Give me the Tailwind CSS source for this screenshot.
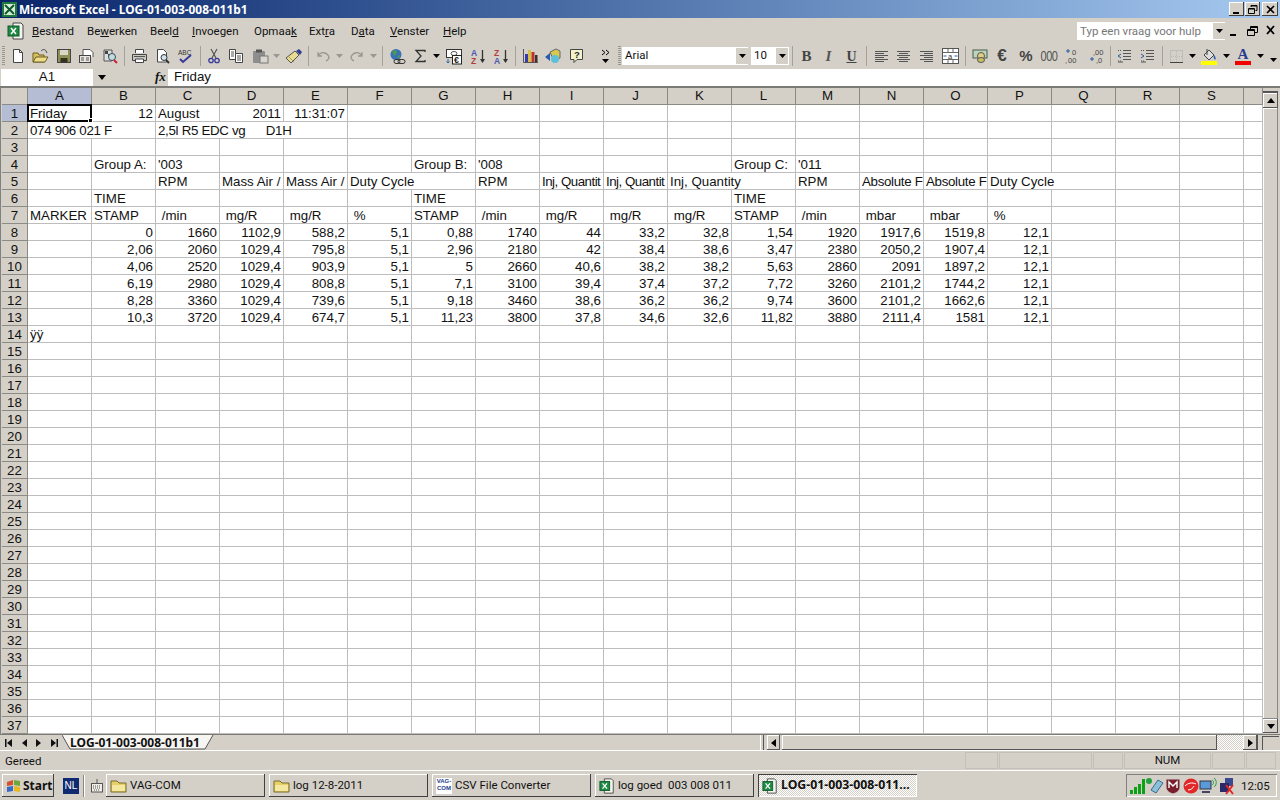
<!DOCTYPE html>
<html><head><meta charset="utf-8"><script src="https://cdn.jsdelivr.net/npm/@tailwindcss/browser@4"></script></head>
<body>
<div class="w-[1280px] h-[800px] overflow-hidden flex flex-col bg-[#d4d0c8] text-[#111] font-['Roboto',sans-serif] text-[11.500px]">
<!-- title -->
<div class="h-[18px] shrink-0 flex items-center bg-linear-to-r from-[#0a246a] to-[#a6caf0] pl-[2px]">
<svg class="w-[15px] h-[15px]" viewBox="0 0 15 15"><rect width="15" height="15" fill="#1d7a3a"/><rect x="2" y="2" width="11" height="11" fill="#d8eadb"/><path d="M3 3l9 9M12 3l-9 9" stroke="#0d5a26" stroke-width="2"/></svg>
<span class="ml-[2px] text-white font-bold font-['Noto_Sans',sans-serif] text-[11.900px] leading-[18px] whitespace-nowrap">Microsoft Excel - LOG-01-003-008-011b1</span>
<div class="ml-auto flex mr-[2px] [&>span]:w-[15px] [&>span]:h-[14px] [&>span]:bg-[#d4d0c8] [&>span]:flex [&>span]:items-center [&>span]:justify-center [&>span]:shadow-[inset_-1px_-1px_0_#404040,inset_1px_1px_0_#fff]">
<span class="mr-[1px]"><svg width="9" height="9" viewBox="0 0 9 9"><rect x="1" y="7" width="6" height="2" fill="#000"/></svg></span>
<span class="mr-[2px]"><svg width="10" height="9" viewBox="0 0 10 9" fill="none" stroke="#000"><path d="M3 2V.5h6v5H7.5M.5 3.5h6v5h-6z"/><path d="M3 1h6M1 4h5"/></svg></span>
<span class="w-[16px]!"><svg width="9" height="9" viewBox="0 0 9 9" stroke="#000" stroke-width="1.6"><path d="M1 1l7 7M8 1l-7 7"/></svg></span>
</div>
</div>
<!-- menu -->
<div class="h-[25px] shrink-0 flex items-center relative">
<span class="ml-[2px] w-[5px] h-[18px]"></span>
<svg class="w-[18px] h-[18px] mr-[7px]" viewBox="0 0 18 18"><path d="M6 1h8l2 2v14H6z" fill="#f4f4ee" stroke="#444"/><rect x="1" y="4" width="11" height="10" fill="#1e8a44" stroke="#0c5a28"/><path d="M4 6l5 6M9 6l-5 6" stroke="#fff" stroke-width="1.4"/></svg>
<div class="flex [&>span]:block whitespace-nowrap leading-[16px]">
<span class="w-[55px]"><u>B</u>estand</span><span class="w-[63px]">Be<u>w</u>erken</span><span class="w-[42px]">Beel<u>d</u></span><span class="w-[62px]"><u>I</u>nvoegen</span><span class="w-[55px]">Opmaa<u>k</u></span><span class="w-[42px]">Ext<u>r</u>a</span><span class="w-[39px]">D<u>a</u>ta</span><span class="w-[53px]"><u>V</u>enster</span><span class="w-[30px]"><u>H</u>elp</span>
</div>
<div class="ml-auto flex items-center mr-[2px]">
<div class="w-[148px] h-[18px] bg-white flex items-center pl-[3px] text-[#777] leading-[18px] whitespace-nowrap">Typ een vraag voor hulp<span class="ml-auto w-[12px] h-[16px] bg-[#d4d0c8] flex items-center justify-center"><svg width="7" height="4" viewBox="0 0 7 4"><path d="M0 0h7L3.5 4z" fill="#000"/></svg></span></div>
<svg class="ml-[3px] w-[50px] h-[14px]" viewBox="0 0 50 14"><rect x="2" y="10" width="6" height="2" fill="#000"/><path d="M22.5 5V2.500h7v6H27M19.500 5.500h7v6h-7z M22 3.500h7M20 6.500h6" fill="none" stroke="#000"/><path d="M39 2l7 8M46 2l-7 8" stroke="#000" stroke-width="1.800"/></svg>
</div>
</div>
<!-- toolbar -->
<div class="h-[26px] shrink-0 flex items-center whitespace-nowrap [&>span]:flex [&>span]:shrink-0 [&>span]:justify-center [&>span]:items-center [&>i]:w-[1px] [&>i]:h-[20px] [&>i]:mx-[3px] [&>i]:bg-[#a5a299] [&>i]:shrink-0">
<span class="w-[6px] h-[20px]"><b class="block w-[3px] h-[20px] bg-[repeating-linear-gradient(#9a978e_0_1px,transparent_1px_2px)]"></b></span>
<span class="w-[23px]"><svg width="16" height="16" viewBox="0 0 16 16"><path d="M3.500 1.500h6l3 3v10h-9z" fill="#fff" stroke="#444"/><path d="M9.500 1.500v3h3" fill="none" stroke="#444"/></svg></span>
<span class="w-[23px]"><svg width="17" height="16" viewBox="0 0 17 16"><path d="M1 14V5h5l1 2h5v7z" fill="#d8c05a" stroke="#6b5f20"/><path d="M1 14l3-5h12l-3 5z" fill="#eedd88" stroke="#6b5f20"/><path d="M9 3c2-2 4-2 5 0l1 2" fill="none" stroke="#444"/></svg></span>
<span class="w-[23px]"><svg width="16" height="16" viewBox="0 0 16 16"><rect x="1.500" y="1.500" width="13" height="13" fill="#8e8e56" stroke="#444"/><rect x="4" y="2" width="8" height="5" fill="#d8d8c4"/><rect x="4.500" y="10" width="7" height="4.500" fill="#33331f"/></svg></span>
<span class="w-[23px]"><svg width="17" height="16" viewBox="0 0 17 16"><path d="M5 7V1.500h7l3 3V9" fill="#fff" stroke="#555"/><rect x="1.500" y="7.500" width="11" height="7" fill="#e8e6de" stroke="#444"/><path d="M3 10h3M3 12h3M8 10h3M8 12h3" stroke="#555"/></svg></span>
<span class="w-[23px]"><svg width="16" height="16" viewBox="0 0 16 16"><path d="M2 2h8v11H2z" fill="#ddd" stroke="#555"/><path d="M3 3h3v3H3zM6 6h3v3H6z" fill="#444"/><circle cx="10" cy="9" r="3.500" fill="#bfe0d8" stroke="#446"/><path d="M12 12l3 3" stroke="#d02030" stroke-width="2"/></svg></span>
<i></i>
<span class="w-[23px]"><svg width="17" height="16" viewBox="0 0 17 16"><path d="M4.500 5V1.500h8V5" fill="#fff" stroke="#444"/><path d="M1.500 6.500h14v6h-14z" fill="#c8c8c0" stroke="#444"/><path d="M4.500 11v3.500h8V11z" fill="#fff" stroke="#444"/><path d="M3 8.500h11" stroke="#555"/></svg></span>
<span class="w-[23px]"><svg width="16" height="16" viewBox="0 0 16 16"><path d="M2.500 1.500h6l3 3V14h-9z" fill="#fff" stroke="#444"/><circle cx="9" cy="9.500" r="3" fill="#cfe4f2" stroke="#333"/><path d="M11 12l3 3" stroke="#333" stroke-width="2"/></svg></span>
<span class="w-[23px]"><svg width="17" height="16" viewBox="0 0 17 16"><text x="1" y="6.500" font-size="6.500" font-family="Liberation Sans" fill="#333">ABC</text><path d="M3 11l3 3 8-7" fill="none" stroke="#3a3a98" stroke-width="2"/></svg></span>
<i></i>
<span class="w-[19px]"><svg width="12" height="16" viewBox="0 0 12 16"><path d="M3 1l5 9M9 1l-5 9" stroke="#555" stroke-width="1.200"/><circle cx="3" cy="12.500" r="2.200" fill="none" stroke="#3a3a98" stroke-width="1.300"/><circle cx="9" cy="12.500" r="2.200" fill="none" stroke="#3a3a98" stroke-width="1.300"/></svg></span>
<span class="w-[26px]"><svg width="16" height="16" viewBox="0 0 16 16"><path d="M1.500 1.500h6v10h-6z" fill="#fff" stroke="#444"/><path d="M7.500 5.500h7v9h-7z" fill="#fff" stroke="#444"/><path d="M3 4h3M3 6h3M3 8h3M9 8h4M9 10h4M9 12h4" stroke="#555"/></svg></span>
<span class="w-[22px]"><svg width="17" height="16" viewBox="0 0 17 16"><rect x="1" y="3" width="12" height="12" rx="1" fill="#8e8e8e"/><rect x="4" y="1.500" width="6" height="3" fill="#555"/><rect x="8" y="8" width="8" height="7" fill="#d8d6ce" stroke="#777"/></svg></span>
<span class="w-[11px]"><svg width="7" height="4" viewBox="0 0 7 4"><path d="M0 0h7L3.500 4z" fill="#9a978e"/></svg></span>
<span class="w-[23px]"><svg width="18" height="16" viewBox="0 0 18 16"><path d="M1 10l9-7 4 4-8 8z" fill="#e8dc90" stroke="#555"/><path d="M11 3l3-2 3 3-2 3z" fill="#2f3e8e"/><path d="M4 9l5 5" stroke="#aaa060"/></svg></span>
<i></i>
<span class="w-[22px]"><svg width="15" height="12" viewBox="0 0 15 12" fill="none" stroke="#9a978e" stroke-width="1.300"><path d="M2 2v4h4M2 6c3-5 9-4 11 1 0 2-1 3-3 4"/></svg></span>
<span class="w-[11px]"><svg width="7" height="4" viewBox="0 0 7 4"><path d="M0 0h7L3.500 4z" fill="#9a978e"/></svg></span>
<span class="w-[23px]"><svg width="15" height="12" viewBox="0 0 15 12" fill="none" stroke="#9a978e" stroke-width="1.300"><path d="M13 2v4H9M13 6C10 1 4 2 2 7c0 2 1 3 3 4"/></svg></span>
<span class="w-[11px]"><svg width="7" height="4" viewBox="0 0 7 4"><path d="M0 0h7L3.500 4z" fill="#9a978e"/></svg></span>
<i></i>
<span class="w-[23px]"><svg width="17" height="17" viewBox="0 0 17 17"><circle cx="7" cy="6.500" r="5.500" fill="#3a70b8"/><path d="M3 3l4-1 1 3-3 3zM8 8l3-1-1 4z" fill="#4a9a50"/><rect x="5" y="11.500" width="6" height="4" rx="2" fill="none" stroke="#333"/><rect x="9" y="11.500" width="7" height="4" rx="2" fill="none" stroke="#333"/></svg></span>
<span class="w-[22px]"><svg width="13" height="14" viewBox="0 0 13 14"><path d="M11 3V1.500H2l5 5.500-5 5.500h9V11" fill="none" stroke="#333" stroke-width="1.300"/></svg></span>
<span class="w-[10px]"><svg width="7" height="4" viewBox="0 0 7 4"><path d="M0 0h7L3.500 4z" fill="#000"/></svg></span>
<span class="w-[25px]"><svg width="18" height="17" viewBox="0 0 18 17"><rect x="1.500" y="1.500" width="15" height="8" fill="#fff" stroke="#333"/><ellipse cx="9" cy="5.500" rx="3" ry="2" fill="none" stroke="#555"/><rect x="7.500" y="7.500" width="9" height="8.500" fill="#fff" stroke="#222"/><text x="9" y="15" font-size="9" font-weight="700" font-family="Liberation Sans" fill="#222">€</text><path d="M3 11v4M1.500 13.500L3 15l1.500-1.500" stroke="#2a62a8" fill="none"/></svg></span>
<span class="w-[23px]"><svg width="16" height="17" viewBox="0 0 16 17"><text x="1" y="8" font-size="8.500" font-family="Liberation Sans" font-weight="700" fill="#4a5ab0">A</text><text x="1" y="16" font-size="8.500" font-family="Liberation Sans" font-weight="700" fill="#b04040">Z</text><path d="M12.500 2v12" stroke="#333" stroke-width="1.300"/><path d="M10 11h5l-2.500 4z" fill="#333"/></svg></span>
<span class="w-[23px]"><svg width="16" height="17" viewBox="0 0 16 17"><text x="1" y="8" font-size="8.500" font-family="Liberation Sans" font-weight="700" fill="#b04040">Z</text><text x="1" y="16" font-size="8.500" font-family="Liberation Sans" font-weight="700" fill="#4a5ab0">A</text><path d="M12.500 2v12" stroke="#333" stroke-width="1.300"/><path d="M10 11h5l-2.500 4z" fill="#333"/></svg></span>
<i></i>
<span class="w-[22px]"><svg width="17" height="16" viewBox="0 0 17 16"><path d="M1.500 1v13.500H16" fill="none" stroke="#555"/><rect x="3" y="6" width="3" height="8" fill="#3a3ab0"/><rect x="6" y="2" width="3" height="12" fill="#d8c040"/><rect x="9.500" y="4" width="3" height="10" fill="#c03030"/><rect x="13" y="7" width="2.500" height="7" fill="#333"/></svg></span>
<span class="w-[23px]"><svg width="17" height="16" viewBox="0 0 17 16"><path d="M6 4l6-3 4 2v7l-6 3z" fill="#d8c850" stroke="#666"/><path d="M1 9l5-4v8z" fill="#2a5ab0"/><circle cx="11" cy="11" r="4" fill="#5cc0d8"/></svg></span>
<span class="w-[24px]"><svg width="15" height="16" viewBox="0 0 15 16"><path d="M1.500 1.500h12v10H8l-3 3v-3H1.500z" fill="#f4f2c8" stroke="#444"/><text x="5" y="10" font-size="9.500" font-weight="700" font-family="Liberation Sans" fill="#223">?</text></svg></span>
<span class="w-[6px]"></span>
<span class="w-[22px]"><svg width="9" height="14" viewBox="0 0 9 14" fill="none"><path d="M1 1l3 2.500L1 6M5 1l3 2.500L5 6" stroke="#000"/><path d="M1 10h7l-3.500 4z" fill="#000"/></svg></span>
<span class="w-[6px] h-[20px]"><b class="block w-[3px] h-[20px] bg-[repeating-linear-gradient(#9a978e_0_1px,transparent_1px_2px)]"></b></span>
<span class="w-[126px] h-[18px] bg-white justify-start! pl-[3px]">Arial<b class="ml-auto w-[12px] h-[16px] bg-[#d4d0c8] flex items-center justify-center"><svg width="7" height="4" viewBox="0 0 7 4"><path d="M0 0h7L3.500 4z" fill="#000"/></svg></b></span>
<span class="w-[38px] h-[18px] ml-[3px] bg-white justify-start! pl-[3px]">10<b class="ml-auto w-[12px] h-[16px] bg-[#d4d0c8] flex items-center justify-center mr-[1px]"><svg width="7" height="4" viewBox="0 0 7 4"><path d="M0 0h7L3.500 4z" fill="#000"/></svg></b></span>
<i></i>
<span class="w-[21px] font-['Liberation_Serif',serif] font-bold text-[15px] text-[#444]">B</span>
<span class="w-[23px] font-['Liberation_Serif',serif] font-bold italic text-[15px] text-[#555]">I</span>
<span class="w-[23px] font-['Liberation_Serif',serif] font-bold underline text-[14px] text-[#444]">U</span>
<i></i>
<span class="w-[22px]"><svg width="15" height="13" viewBox="0 0 15 13" stroke="#555"><path d="M1 1.500h13M1 3.500h9M1 5.500h13M1 7.500h9M1 9.500h13M1 11.500h9"/></svg></span>
<span class="w-[23px]"><svg width="15" height="13" viewBox="0 0 15 13" stroke="#555"><path d="M1 1.500h13M3 3.500h9M1 5.500h13M3 7.500h9M1 9.500h13M3 11.500h9"/></svg></span>
<span class="w-[23px]"><svg width="15" height="13" viewBox="0 0 15 13" stroke="#555"><path d="M1 1.500h13M5 3.500h9M1 5.500h13M5 7.500h9M1 9.500h13M5 11.500h9"/></svg></span>
<span class="w-[24px]"><svg width="17" height="16" viewBox="0 0 17 16"><rect x=".5" y=".5" width="16" height="15" fill="#fff" stroke="#555"/><path d="M1 4.500h15M1 11.500h15M6 1v3M11 1v3M6 12v3M11 12v3" stroke="#666"/><text x="6" y="10.500" font-size="7.500" font-family="Liberation Sans" fill="#333">a</text><path d="M1.500 8h3M15.500 8h-3" stroke="#2a5aa0"/></svg></span>
<i></i>
<span class="w-[21px]"><svg width="16" height="16" viewBox="0 0 16 16"><rect x="1" y="2" width="14" height="8" fill="#bcd4bc" stroke="#4a5a4a"/><circle cx="9" cy="8" r="3.500" fill="#e0d080" stroke="#555"/><ellipse cx="9" cy="12" rx="3.500" ry="2.500" fill="#c8c060" stroke="#555"/></svg></span>
<span class="w-[24px] font-['Liberation_Sans',sans-serif] font-bold text-[17px] text-[#444]">€</span>
<span class="w-[24px] font-['Liberation_Sans',sans-serif] font-bold text-[15px] text-[#444]">%</span>
<span class="w-[22px] font-['Liberation_Sans',sans-serif] text-[11px] tracking-[-0.500px] text-[#555] scale-y-125">000</span>
<span class="w-[24px]"><svg width="16" height="16" viewBox="0 0 16 16"><path d="M2 3h4M4 1v4" stroke="#2a5aa0"/><text x="8" y="7" font-size="7.500" font-family="Liberation Sans" fill="#444">0</text><text x="1" y="15" font-size="7.500" font-family="Liberation Sans" fill="#444">,</text><text x="4" y="15" font-size="7.500" font-family="Liberation Sans" fill="#444">00</text></svg></span>
<span class="w-[23px]"><svg width="16" height="16" viewBox="0 0 16 16"><text x="5" y="7" font-size="7.500" font-family="Liberation Sans" fill="#444">,00</text><path d="M2 11h4M4 9v4" stroke="#2a5aa0"/><text x="8" y="15" font-size="7.500" font-family="Liberation Sans" fill="#444">,0</text></svg></span>
<i></i>
<span class="w-[21px]"><svg width="15" height="14" viewBox="0 0 15 14" fill="none" stroke="#555"><path d="M6 1.500h8M6 4.500h8M6 7.500h8M6 10.500h8M1 13h5"/><path d="M4 5L1 7l3 2" stroke="#2a5aa0"/><path d="M1 1.500h3M1 12h3" stroke-dasharray="1 1"/></svg></span>
<span class="w-[24px]"><svg width="15" height="14" viewBox="0 0 15 14" fill="none" stroke="#555"><path d="M6 1.500h8M6 4.500h8M6 7.500h8M6 10.500h8M1 13h5"/><path d="M1 5l3 2-3 2" stroke="#2a5aa0"/><path d="M1 1.500h3M1 12h3" stroke-dasharray="1 1"/></svg></span>
<i></i>
<span class="w-[21px]"><svg width="15" height="15" viewBox="0 0 15 15" fill="none"><rect x="1.500" y="1.500" width="12" height="12" stroke="#aaa" stroke-dasharray="1 1"/><path d="M7.500 2v11M2 7.500h11" stroke="#bbb" stroke-dasharray="1 1"/><path d="M1 13.500h13" stroke="#444"/></svg></span>
<span class="w-[11px]"><svg width="7" height="4" viewBox="0 0 7 4"><path d="M0 0h7L3.500 4z" fill="#000"/></svg></span>
<span class="w-[23px]"><svg width="17" height="17" viewBox="0 0 17 17"><path d="M3 7l5-5 5 5-5 5z" fill="#ddd" stroke="#444"/><path d="M6 1v6" stroke="#444"/><path d="M13 7c2 2 2 4 1 5-1-1-2-3-1-5z" fill="#2a5ab0"/><rect y="13" width="16" height="4" fill="#ffff00"/></svg></span>
<span class="w-[10px]"><svg width="7" height="4" viewBox="0 0 7 4"><path d="M0 0h7L3.500 4z" fill="#000"/></svg></span>
<span class="w-[24px] flex-col! relative"><span class="font-['Liberation_Serif',serif] font-bold text-[15px] leading-[13px] text-[#2a3a90]">A</span><b class="block w-[16px] h-[4px] bg-[#f00000]"></b></span>
<span class="w-[11px]"><svg width="7" height="4" viewBox="0 0 7 4"><path d="M0 0h7L3.500 4z" fill="#000"/></svg></span>
<span class="w-[14px] pt-[8px]"><svg width="7" height="4" viewBox="0 0 7 4"><path d="M0 0h7L3.500 4z" fill="#000"/></svg></span>
</div>
<!-- formula bar -->
<div class="h-[17px] shrink-0 flex items-stretch">
<div class="ml-[1px] w-[92px] bg-white text-center font-['Liberation_Sans',sans-serif] text-[13.300px] leading-[16px]">A1</div>
<div class="w-[75px] flex items-center relative"><svg class="ml-[5px]" width="8" height="5" viewBox="0 0 8 5"><path d="M0 0h8L4 5z" fill="#000"/></svg><span class="absolute left-[62px] top-[-1px] font-['Liberation_Serif',serif] italic font-bold text-[13px] leading-[18px]">fx</span></div>
<div class="flex-1 bg-white pl-[6px] font-['Liberation_Sans',sans-serif] text-[13.300px] leading-[16px]">Friday</div>
</div>
<!-- sheet -->
<div class="h-[649px] shrink-0 flex border-t-2 border-b border-[#7c7a74] bg-white">
<div class="w-[2px] bg-[#d4d0c8] border-l border-[#808080]"></div>
<table class="w-[1261px] table-fixed border-separate border-spacing-0 font-['Liberation_Sans',sans-serif] text-[13.300px] leading-[14px] text-[#111] [&_td]:h-[17px] [&_td]:p-0 [&_td]:pt-[2px] [&_td]:px-[2px] [&_td]:border-r [&_td]:border-b [&_td]:border-[#bdbdbd] [&_td]:whitespace-pre [&_th]:h-[17px] [&_th]:p-0 [&_th]:pt-[2px] [&_th]:font-normal [&_th]:text-center [&_th]:bg-[#d4d0c8] [&_th]:border-r [&_th]:border-b [&_th]:border-[#8c8a84]">
<colgroup><col class="w-[26px]"><col class="w-[64px]"><col class="w-[64px]"><col class="w-[64px]"><col class="w-[64px]"><col class="w-[64px]"><col class="w-[64px]"><col class="w-[64px]"><col class="w-[64px]"><col class="w-[64px]"><col class="w-[64px]"><col class="w-[64px]"><col class="w-[64px]"><col class="w-[64px]"><col class="w-[64px]"><col class="w-[64px]"><col class="w-[64px]"><col class="w-[64px]"><col class="w-[64px]"><col class="w-[64px]"><col class="w-[19px]"></colgroup>
<tr class="[&>th]:pt-0!"><th></th><th class="bg-[#b4bdd4]!">A</th><th>B</th><th>C</th><th>D</th><th>E</th><th>F</th><th>G</th><th>H</th><th>I</th><th>J</th><th>K</th><th>L</th><th>M</th><th>N</th><th>O</th><th>P</th><th>Q</th><th>R</th><th>S</th><th></th></tr>
<tr><th class="bg-[#b4bdd4]!">1</th><td class="relative">Friday<b class="absolute left-[-1px] top-[-1px] w-[65px] h-[18px] border-2 border-black"></b><b class="absolute left-[60px] top-[13px] w-[5px] h-[5px] bg-black border border-white"></b></td><td class="text-right">12</td><td>August</td><td class="text-right">2011</td><td class="text-right">11:31:07</td><td></td><td></td><td></td><td></td><td></td><td></td><td></td><td></td><td></td><td></td><td></td><td></td><td></td><td></td><td></td></tr>
<tr><th>2</th><td class="border-r-0! tracking-[-0.300px]">074 906 021 F</td><td></td><td class="border-r-0! tracking-[-0.300px]">2,5l R5 EDC vg      D1H</td><td class="border-r-0!"></td><td></td><td></td><td></td><td></td><td></td><td></td><td></td><td></td><td></td><td></td><td></td><td></td><td></td><td></td><td></td><td></td></tr>
<tr><th>3</th><td></td><td></td><td></td><td></td><td></td><td></td><td></td><td></td><td></td><td></td><td></td><td></td><td></td><td></td><td></td><td></td><td></td><td></td><td></td><td></td></tr>
<tr><th>4</th><td></td><td>Group A:</td><td>'003</td><td></td><td></td><td></td><td>Group B:</td><td>'008</td><td></td><td></td><td></td><td>Group C:</td><td>'011</td><td></td><td></td><td></td><td></td><td></td><td></td><td></td></tr>
<tr><th>5</th><td></td><td></td><td>RPM</td><td>Mass Air /</td><td>Mass Air /</td><td class="border-r-0!">Duty Cycle</td><td></td><td>RPM</td><td class="tracking-[-0.500px]">Inj, Quantit</td><td class="tracking-[-0.500px]">Inj, Quantit</td><td class="border-r-0!">Inj, Quantity</td><td></td><td>RPM</td><td class="tracking-[-0.300px]">Absolute F</td><td class="tracking-[-0.300px]">Absolute F</td><td class="border-r-0!">Duty Cycle</td><td></td><td></td><td></td><td></td></tr>
<tr><th>6</th><td></td><td>TIME</td><td></td><td></td><td></td><td></td><td>TIME</td><td></td><td></td><td></td><td></td><td>TIME</td><td></td><td></td><td></td><td></td><td></td><td></td><td></td><td></td></tr>
<tr><th>7</th><td>MARKER</td><td>STAMP</td><td> /min</td><td> mg/R</td><td> mg/R</td><td> %</td><td>STAMP</td><td> /min</td><td> mg/R</td><td> mg/R</td><td> mg/R</td><td>STAMP</td><td> /min</td><td> mbar</td><td> mbar</td><td> %</td><td></td><td></td><td></td><td></td></tr>
<tr class="text-right"><th>8</th><td></td><td>0</td><td>1660</td><td>1102,9</td><td>588,2</td><td>5,1</td><td>0,88</td><td>1740</td><td>44</td><td>33,2</td><td>32,8</td><td>1,54</td><td>1920</td><td>1917,6</td><td>1519,8</td><td>12,1</td><td></td><td></td><td></td><td></td></tr>
<tr class="text-right"><th>9</th><td></td><td>2,06</td><td>2060</td><td>1029,4</td><td>795,8</td><td>5,1</td><td>2,96</td><td>2180</td><td>42</td><td>38,4</td><td>38,6</td><td>3,47</td><td>2380</td><td>2050,2</td><td>1907,4</td><td>12,1</td><td></td><td></td><td></td><td></td></tr>
<tr class="text-right"><th>10</th><td></td><td>4,06</td><td>2520</td><td>1029,4</td><td>903,9</td><td>5,1</td><td>5</td><td>2660</td><td>40,6</td><td>38,2</td><td>38,2</td><td>5,63</td><td>2860</td><td>2091</td><td>1897,2</td><td>12,1</td><td></td><td></td><td></td><td></td></tr>
<tr class="text-right"><th>11</th><td></td><td>6,19</td><td>2980</td><td>1029,4</td><td>808,8</td><td>5,1</td><td>7,1</td><td>3100</td><td>39,4</td><td>37,4</td><td>37,2</td><td>7,72</td><td>3260</td><td>2101,2</td><td>1744,2</td><td>12,1</td><td></td><td></td><td></td><td></td></tr>
<tr class="text-right"><th>12</th><td></td><td>8,28</td><td>3360</td><td>1029,4</td><td>739,6</td><td>5,1</td><td>9,18</td><td>3460</td><td>38,6</td><td>36,2</td><td>36,2</td><td>9,74</td><td>3600</td><td>2101,2</td><td>1662,6</td><td>12,1</td><td></td><td></td><td></td><td></td></tr>
<tr class="text-right"><th>13</th><td></td><td>10,3</td><td>3720</td><td>1029,4</td><td>674,7</td><td>5,1</td><td>11,23</td><td>3800</td><td>37,8</td><td>34,6</td><td>32,6</td><td>11,82</td><td>3880</td><td>2111,4</td><td>1581</td><td>12,1</td><td></td><td></td><td></td><td></td></tr>
<tr><th>14</th><td>ÿÿ</td><td></td><td></td><td></td><td></td><td></td><td></td><td></td><td></td><td></td><td></td><td></td><td></td><td></td><td></td><td></td><td></td><td></td><td></td><td></td></tr>
<tr><th>15</th><td></td><td></td><td></td><td></td><td></td><td></td><td></td><td></td><td></td><td></td><td></td><td></td><td></td><td></td><td></td><td></td><td></td><td></td><td></td><td></td></tr>
<tr><th>16</th><td></td><td></td><td></td><td></td><td></td><td></td><td></td><td></td><td></td><td></td><td></td><td></td><td></td><td></td><td></td><td></td><td></td><td></td><td></td><td></td></tr>
<tr><th>17</th><td></td><td></td><td></td><td></td><td></td><td></td><td></td><td></td><td></td><td></td><td></td><td></td><td></td><td></td><td></td><td></td><td></td><td></td><td></td><td></td></tr>
<tr><th>18</th><td></td><td></td><td></td><td></td><td></td><td></td><td></td><td></td><td></td><td></td><td></td><td></td><td></td><td></td><td></td><td></td><td></td><td></td><td></td><td></td></tr>
<tr><th>19</th><td></td><td></td><td></td><td></td><td></td><td></td><td></td><td></td><td></td><td></td><td></td><td></td><td></td><td></td><td></td><td></td><td></td><td></td><td></td><td></td></tr>
<tr><th>20</th><td></td><td></td><td></td><td></td><td></td><td></td><td></td><td></td><td></td><td></td><td></td><td></td><td></td><td></td><td></td><td></td><td></td><td></td><td></td><td></td></tr>
<tr><th>21</th><td></td><td></td><td></td><td></td><td></td><td></td><td></td><td></td><td></td><td></td><td></td><td></td><td></td><td></td><td></td><td></td><td></td><td></td><td></td><td></td></tr>
<tr><th>22</th><td></td><td></td><td></td><td></td><td></td><td></td><td></td><td></td><td></td><td></td><td></td><td></td><td></td><td></td><td></td><td></td><td></td><td></td><td></td><td></td></tr>
<tr><th>23</th><td></td><td></td><td></td><td></td><td></td><td></td><td></td><td></td><td></td><td></td><td></td><td></td><td></td><td></td><td></td><td></td><td></td><td></td><td></td><td></td></tr>
<tr><th>24</th><td></td><td></td><td></td><td></td><td></td><td></td><td></td><td></td><td></td><td></td><td></td><td></td><td></td><td></td><td></td><td></td><td></td><td></td><td></td><td></td></tr>
<tr><th>25</th><td></td><td></td><td></td><td></td><td></td><td></td><td></td><td></td><td></td><td></td><td></td><td></td><td></td><td></td><td></td><td></td><td></td><td></td><td></td><td></td></tr>
<tr><th>26</th><td></td><td></td><td></td><td></td><td></td><td></td><td></td><td></td><td></td><td></td><td></td><td></td><td></td><td></td><td></td><td></td><td></td><td></td><td></td><td></td></tr>
<tr><th>27</th><td></td><td></td><td></td><td></td><td></td><td></td><td></td><td></td><td></td><td></td><td></td><td></td><td></td><td></td><td></td><td></td><td></td><td></td><td></td><td></td></tr>
<tr><th>28</th><td></td><td></td><td></td><td></td><td></td><td></td><td></td><td></td><td></td><td></td><td></td><td></td><td></td><td></td><td></td><td></td><td></td><td></td><td></td><td></td></tr>
<tr><th>29</th><td></td><td></td><td></td><td></td><td></td><td></td><td></td><td></td><td></td><td></td><td></td><td></td><td></td><td></td><td></td><td></td><td></td><td></td><td></td><td></td></tr>
<tr><th>30</th><td></td><td></td><td></td><td></td><td></td><td></td><td></td><td></td><td></td><td></td><td></td><td></td><td></td><td></td><td></td><td></td><td></td><td></td><td></td><td></td></tr>
<tr><th>31</th><td></td><td></td><td></td><td></td><td></td><td></td><td></td><td></td><td></td><td></td><td></td><td></td><td></td><td></td><td></td><td></td><td></td><td></td><td></td><td></td></tr>
<tr><th>32</th><td></td><td></td><td></td><td></td><td></td><td></td><td></td><td></td><td></td><td></td><td></td><td></td><td></td><td></td><td></td><td></td><td></td><td></td><td></td><td></td></tr>
<tr><th>33</th><td></td><td></td><td></td><td></td><td></td><td></td><td></td><td></td><td></td><td></td><td></td><td></td><td></td><td></td><td></td><td></td><td></td><td></td><td></td><td></td></tr>
<tr><th>34</th><td></td><td></td><td></td><td></td><td></td><td></td><td></td><td></td><td></td><td></td><td></td><td></td><td></td><td></td><td></td><td></td><td></td><td></td><td></td><td></td></tr>
<tr><th>35</th><td></td><td></td><td></td><td></td><td></td><td></td><td></td><td></td><td></td><td></td><td></td><td></td><td></td><td></td><td></td><td></td><td></td><td></td><td></td><td></td></tr>
<tr><th>36</th><td></td><td></td><td></td><td></td><td></td><td></td><td></td><td></td><td></td><td></td><td></td><td></td><td></td><td></td><td></td><td></td><td></td><td></td><td></td><td></td></tr>
<tr><th>37</th><td></td><td></td><td></td><td></td><td></td><td></td><td></td><td></td><td></td><td></td><td></td><td></td><td></td><td></td><td></td><td></td><td></td><td></td><td></td><td></td></tr>
</table>
<!-- v scrollbar -->
<div class="w-[17px] bg-[#d4d0c8] flex flex-col pr-[2px] shrink-0">
<div class="h-[5px] border-b-2 border-[#555] shrink-0"></div>
<div class="h-[15px] shrink-0 flex items-center justify-center shadow-[inset_-1px_-1px_0_#555,inset_1px_1px_0_#fff]"><svg width="8" height="5" viewBox="0 0 8 5"><path d="M4 0l4 5H0z" fill="#000"/></svg></div>
<div class="flex-1 shadow-[inset_-1px_-1px_0_#888,inset_1px_1px_0_#fff]"></div>
<div class="h-[14px] shrink-0 flex items-center justify-center shadow-[inset_-1px_-1px_0_#555,inset_1px_1px_0_#fff]"><svg width="8" height="5" viewBox="0 0 8 5"><path d="M0 0h8L4 5z" fill="#000"/></svg></div>
<div class="h-[1px] shrink-0"></div>
</div>
</div>
<!-- tabs -->
<div class="h-[15px] shrink-0 flex items-stretch relative">
<div class="w-[62px] flex items-center shrink-0 [&>svg]:absolute">
<svg class="left-[5px]" width="7" height="8" viewBox="0 0 7 8"><path d="M0 0h1.500v8H0zM7 0v8L2 4z" fill="#111"/></svg>
<svg class="left-[22px]" width="5" height="8" viewBox="0 0 5 8"><path d="M5 0v8L0 4z" fill="#111"/></svg>
<svg class="left-[36px]" width="5" height="8" viewBox="0 0 5 8"><path d="M0 0v8l5-4z" fill="#111"/></svg>
<svg class="left-[51px]" width="7" height="8" viewBox="0 0 7 8"><path d="M5.500 0H7v8H5.500zM0 0v8l5-4z" fill="#111"/></svg>
</div>
<div class="w-[152px] shrink-0 relative">
<svg class="absolute left-0 top-0" width="152" height="15" viewBox="0 0 152 15"><path d="M0 0l8 14h135l8-14" fill="#f6f5f2" stroke="#555"/></svg>
<span class="relative block pl-[8px] font-bold text-[12px] leading-[15px] whitespace-nowrap font-['Noto_Sans',sans-serif]">LOG-01-003-008-011b1</span>
</div>
<div class="w-[546px] shrink-0"></div>
<div class="w-[4px] shrink-0 shadow-[inset_-1px_0_0_#555,inset_1px_0_0_#fff]"></div>
<div class="w-[3px] shrink-0"></div>
<div class="w-[13px] shrink-0 flex items-center justify-center shadow-[inset_-1px_-1px_0_#555,inset_1px_1px_0_#fff]"><svg width="5" height="8" viewBox="0 0 5 8"><path d="M5 0v8L0 4z" fill="#000"/></svg></div>
<div class="w-[2px] shrink-0"></div>
<div class="w-[435px] shrink-0 shadow-[inset_-1px_-1px_0_#555,inset_1px_1px_0_#fff]"></div>
<div class="w-[26px] shrink-0 bg-[image:repeating-conic-gradient(#fff_0_25%,#d4d0c8_0_50%)] bg-[length:2px_2px]"></div>
<div class="w-[14px] shrink-0 flex items-center justify-center shadow-[inset_-1px_-1px_0_#555,inset_1px_1px_0_#fff]"><svg width="5" height="8" viewBox="0 0 5 8"><path d="M0 0v8l5-4z" fill="#000"/></svg></div>
<div class="w-[4px] shrink-0 border-l border-[#555]"></div>
<div class="w-[17px] shrink-0 border-l border-t border-[#555] mt-[1px] ml-[1px]"></div>
</div>
<!-- status -->
<div class="h-[21px] shrink-0 flex items-center border-t border-white border-b relative">
<span class="pl-[5px] pt-[1px] leading-[18px]">Gereed</span>
<div class="ml-auto mr-[3px] h-[17px] flex [&>div]:border [&>div]:border-[#c4c0b8] [&>div]:h-[17px] [&>div]:mr-[1px]">
<div class="w-[33px]"></div><div class="w-[93px]"></div><div class="w-[30px]"></div><div class="w-[87px] text-center leading-[15px]">NUM</div><div class="w-[33px]"></div><div class="w-[30px]"></div>
</div>
</div>
<!-- taskbar -->
<div class="h-[29px] shrink-0 flex items-center relative [&>button]:h-[23px] [&>button]:w-[159px] [&>button]:mr-[4px] [&>button]:flex [&>button]:items-center [&>button]:pl-[4px] [&>button]:bg-[#d4d0c8] [&>button]:shadow-[inset_-1px_-1px_0_#404040,inset_1px_1px_0_#fff] [&>button]:whitespace-pre">
<div class="ml-[2px] w-[52px] h-[23px] flex items-center pl-[4px] shadow-[inset_-1px_-1px_0_#404040,inset_1px_1px_0_#fff] font-bold font-['Noto_Sans',sans-serif] text-[12px]">
<svg class="mr-[2px] shrink-0" width="15" height="14" viewBox="0 0 15 14"><path d="M1 3l6-2v5L1 7z" fill="#d8502a"/><path d="M8 1l6 1v5l-6-1z" fill="#6aa83a"/><path d="M1 8l6-1v5l-6 1z" fill="#3a6ac8"/><path d="M8 7l6 1v5l-6-1z" fill="#e8b820"/></svg>Start</div>
<div class="ml-[9px] w-[16px] h-[16px] bg-[#0f2a70] text-white text-[10px] leading-[16px] text-center font-['Liberation_Sans',sans-serif]">NL</div>
<i class="ml-[4px] w-[1px] h-[22px] bg-[#888] shadow-[1px_0_0_#fff]"></i>
<svg class="ml-[7px] mr-[3px]" width="12" height="14" viewBox="0 0 12 14" fill="none" stroke="#555"><path d="M6 0v4"/><rect x=".5" y="4.500" width="11" height="8.500" fill="#f0eee6"/><path d="M2 7h8M2 9h8M3 11h6" stroke-dasharray="1 1"/></svg>
<button><svg class="mr-[3px] shrink-0" width="17" height="14" viewBox="0 0 17 14"><path d="M1 13V2h6l2 2h7v9z" fill="#e8d068" stroke="#776a28"/><path d="M2 6h13v6H2z" fill="#f4e8a0"/></svg>VAG-COM</button>
<button><svg class="mr-[3px] shrink-0" width="17" height="14" viewBox="0 0 17 14"><path d="M1 13V2h6l2 2h7v9z" fill="#e8d068" stroke="#776a28"/><path d="M2 6h13v6H2z" fill="#f4e8a0"/></svg>log 12-8-2011</button>
<button><span class="w-[16px] h-[16px] mr-[3px] bg-white text-[#223a90] text-[6px] leading-[7px] font-bold text-center shrink-0 font-['Liberation_Sans',sans-serif]">VAG-<br>COM</span>CSV File Converter</button>
<button><svg class="mr-[3px] shrink-0" width="16" height="16" viewBox="0 0 18 18"><path d="M6 1h8l2 2v14H6z" fill="#f4f4ee" stroke="#444"/><rect x="1" y="4" width="11" height="10" fill="#1e8a44" stroke="#0c5a28"/><path d="M4 6l5 6M9 6l-5 6" stroke="#fff" stroke-width="1.400"/></svg>log goed  003 008 011</button>
<button class="font-bold font-['Noto_Sans',sans-serif] text-[12.300px] bg-[image:repeating-conic-gradient(#fff_0_25%,#d4d0c8_0_50%)]! bg-[length:2px_2px] shadow-[inset_1px_1px_0_#404040,inset_-1px_-1px_0_#fff]!"><svg class="mr-[3px] shrink-0" width="16" height="16" viewBox="0 0 18 18"><path d="M6 1h8l2 2v14H6z" fill="#f4f4ee" stroke="#444"/><rect x="1" y="4" width="11" height="10" fill="#1e8a44" stroke="#0c5a28"/><path d="M4 6l5 6M9 6l-5 6" stroke="#fff" stroke-width="1.400"/></svg>LOG-01-003-008-011...</button>
<div class="ml-auto mr-[3px] w-[151px] h-[23px] flex items-center pl-[3px] shadow-[inset_1px_1px_0_#808080,inset_-1px_-1px_0_#fff]">
<svg width="106" height="18" viewBox="0 0 106 18"><path d="M1 13h3v4H1zM5 10h3v7H5zM9 7h3v10H9zM13 2h3v15h-3z" fill="#0ea018"/><path d="M22 13l7-10 5 3-7 10z" fill="#8cc0d8" stroke="#3a6a90"/><circle cx="20" cy="4" r="3" fill="#20a040"/><path d="M37 2h14v8c0 4-4 6-7 7-3-1-7-3-7-7z" fill="#7a1f2c" stroke="#ccc"/><path d="M40 11V5l4 4 4-4v6" fill="none" stroke="#fff" stroke-width="1.400"/><circle cx="62" cy="9" r="7.500" fill="#e02828"/><path d="M56 9c3-3 7-4 11-2M59 13c3 0 5-2 6-4" stroke="#fff" fill="none"/><rect x="71" y="4" width="11" height="8" fill="#5a9ad8" stroke="#334"/><path d="M73 15h8" stroke="#446" stroke-width="2"/><path d="M83 3c2 1 2 4 0 5M85 1c3 2 3 7 0 9" stroke="#20a040" fill="none"/><rect x="96" y="1" width="8" height="8" fill="#3a4a90"/><rect x="91" y="6" width="9" height="9" fill="#2a2a6a"/><path d="M97 8l7 9M104 8l-7 9" stroke="#e02828" stroke-width="2"/></svg>
<span class="ml-[6px] leading-[16px]">12:05</span>
</div>
</div>
</div>
</body></html>
